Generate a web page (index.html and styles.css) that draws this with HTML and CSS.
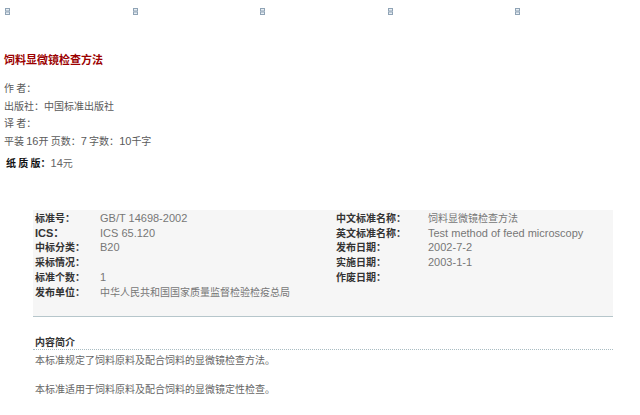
FILE: index.html
```html
<!DOCTYPE html>
<html lang="zh">
<head>
<meta charset="utf-8">
<title>饲料显微镜检查方法</title>
<link rel="stylesheet" href="styles.css">
</head>
<body>
<div class="icons">
  <span class="ico"><svg width="5" height="7" viewBox="0 0 5 7"><rect x="0.5" y="0.5" width="4" height="2.5" fill="#e8eef4" stroke="#8fa3b5" stroke-width="1"/><rect x="0.5" y="4" width="4" height="2.5" fill="#e8eef4" stroke="#8fa3b5" stroke-width="1"/></svg></span>
  <span class="ico"><svg width="5" height="7" viewBox="0 0 5 7"><rect x="0.5" y="0.5" width="4" height="2.5" fill="#e8eef4" stroke="#8fa3b5" stroke-width="1"/><rect x="0.5" y="4" width="4" height="2.5" fill="#e8eef4" stroke="#8fa3b5" stroke-width="1"/></svg></span>
  <span class="ico"><svg width="5" height="7" viewBox="0 0 5 7"><rect x="0.5" y="0.5" width="4" height="2.5" fill="#e8eef4" stroke="#8fa3b5" stroke-width="1"/><rect x="0.5" y="4" width="4" height="2.5" fill="#e8eef4" stroke="#8fa3b5" stroke-width="1"/></svg></span>
  <span class="ico"><svg width="5" height="7" viewBox="0 0 5 7"><rect x="0.5" y="0.5" width="4" height="2.5" fill="#e8eef4" stroke="#8fa3b5" stroke-width="1"/><rect x="0.5" y="4" width="4" height="2.5" fill="#e8eef4" stroke="#8fa3b5" stroke-width="1"/></svg></span>
  <span class="ico"><svg width="5" height="7" viewBox="0 0 5 7"><rect x="0.5" y="0.5" width="4" height="2.5" fill="#e8eef4" stroke="#8fa3b5" stroke-width="1"/><rect x="0.5" y="4" width="4" height="2.5" fill="#e8eef4" stroke="#8fa3b5" stroke-width="1"/></svg></span>
</div>

<h1 class="title">饲料显微镜检查方法</h1>

<div class="info">
  <p>作 者：</p>
  <p>出版社：中国标准出版社</p>
  <p>译 者：</p>
  <p>平装 <span class="en">16</span>开 页数：<span class="en">7</span> 字数：<span class="en">10</span>千字</p>
</div>
<p class="price"><b>纸 质 版：</b><span class="en">14</span>元</p>

<div class="detail">
  <div class="grid">
    <div class="lab">标准号：</div><div class="val en">GB/T 14698-2002</div>
    <div class="lab">中文标准名称：</div><div class="val">饲料显微镜检查方法</div>
    <div class="lab en">ICS：</div><div class="val en">ICS 65.120</div>
    <div class="lab">英文标准名称：</div><div class="val en">Test method of feed microscopy</div>
    <div class="lab">中标分类：</div><div class="val en">B20</div>
    <div class="lab">发布日期：</div><div class="val en">2002-7-2</div>
    <div class="lab">采标情况：</div><div class="val"></div>
    <div class="lab">实施日期：</div><div class="val en">2003-1-1</div>
    <div class="lab">标准个数：</div><div class="val en">1</div>
    <div class="lab">作废日期：</div><div class="val"></div>
    <div class="lab">发布单位：</div><div class="val">中华人民共和国国家质量监督检验检疫总局</div>
    <div class="lab"></div><div class="val"></div>
  </div>
</div>

<div class="intro">
  <h2 class="intro-title">内容简介</h2>
  <p class="first">本标准规定了饲料原料及配合饲料的显微镜检查方法。</p>
  <p class="gap">本标准适用于饲料原料及配合饲料的显微镜定性检查。</p>
</div>
</body>
</html>
```

FILE: styles.css
```css
html, body {
  margin: 0;
  background: #ffffff;
}
body {
  padding: 0 4px;
  font-family: "Noto Sans CJK SC", "Liberation Sans", sans-serif;
  font-size: 10px;
  color: #5a5a5a;
}
.en {
  font-family: "Liberation Sans", "Noto Sans CJK SC", sans-serif;
  font-size: 11px;
}
.icons {
  display: grid;
  grid-template-columns: repeat(5, 127.5px);
  height: 20px;
  padding-top: 8px;
  box-sizing: border-box;
}
.ico {
  display: block;
  height: 7px;
  line-height: 0;
  padding-left: 1px;
}
.title {
  margin: 32px 0 0 0;
  font-size: 11px;
  line-height: 14px;
  font-weight: bold;
  color: #9b0000;
}
.info {
  margin-top: 13px;
}
.info p {
  margin: 0;
  line-height: 17.7px;
  height: 17.7px;
}
.price {
  margin: 4px 0 0 0;
  line-height: 18px;
  color: #666666;
}
.price b {
  color: #111111;
  font-size: 10px;
  padding-left: 2px;
}
.detail {
  width: 580px;
  margin: 38px 0 0 29px;
  background: #f6f6f6;
  border-bottom: 1px solid #b6c6cb;
  padding: 1px 0 16px 2px;
  box-sizing: border-box;
}
.grid {
  display: grid;
  grid-template-columns: 65px 236px 92px 1fr;
  grid-auto-rows: 14.8px;
  line-height: 14.8px;
}
.lab {
  font-weight: bold;
  color: #333333;
  white-space: nowrap;
}
.lab.en {
  font-size: 11px;
}
.val {
  color: #777777;
  white-space: nowrap;
}
.intro {
  width: 580px;
  margin: 17px 0 0 29px;
}
.intro-title {
  margin: 0;
  padding-left: 2px;
  font-size: 10px;
  font-weight: bold;
  color: #333333;
  line-height: 15px;
  border-bottom: 1px dotted #a9bcc2;
}
.intro p {
  margin: 0;
  padding-left: 2px;
  line-height: 15px;
  color: #666666;
}
.intro p.first {
  margin-top: 2px;
}
.intro p.gap {
  margin-top: 14px;
}
```
